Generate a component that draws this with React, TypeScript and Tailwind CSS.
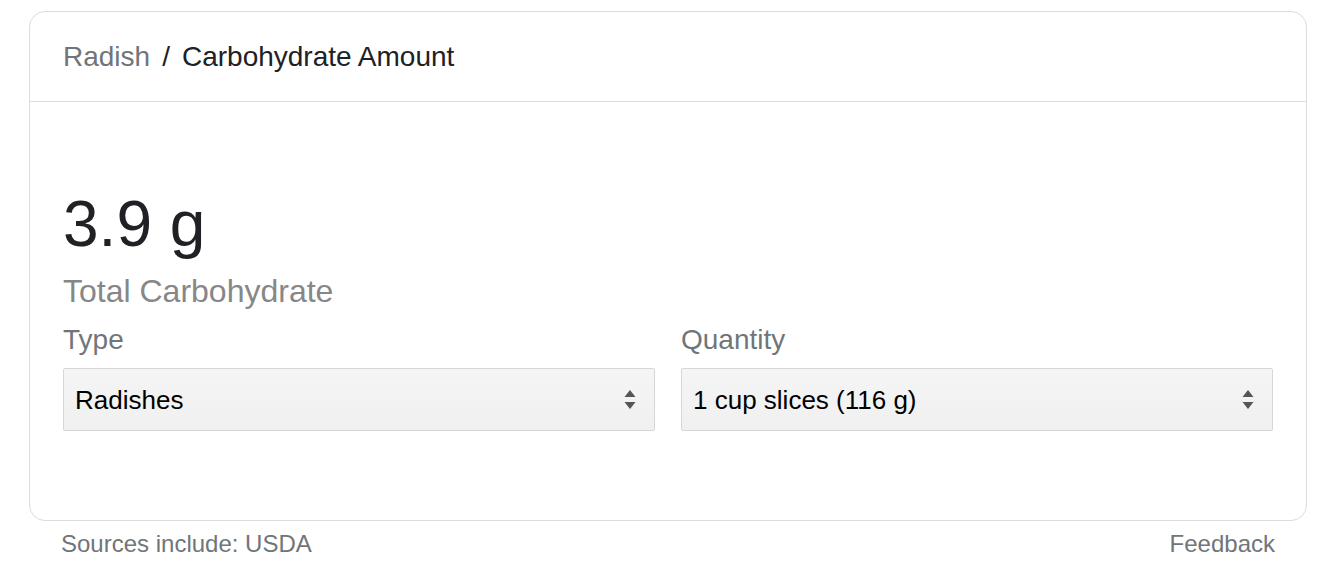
import { useState } from 'react';

const TYPES = ['Radishes', 'Radishes, oriental, raw', 'Radishes, white icicle, raw'];
const QUANTITIES = ['1 cup slices (116 g)', '100 grams', '1 medium (4.5 g)'];

function UpDownArrows() {
  return (
    <svg width="12" height="24" viewBox="0 0 12 24" className="shrink-0">
      <path d="M6 2 L11.5 9 L0.5 9 Z" fill="#555" />
      <path d="M0.5 14 L11.5 14 L6 21 Z" fill="#555" />
    </svg>
  );
}

function SelectBox({ value }: { value: string }) {
  return (
    <div className="flex h-[63px] items-center justify-between rounded-[2px] border border-[#d6d6d6] bg-gradient-to-b from-[#f5f5f5] to-[#f0f0f0] pl-[11px] pr-[18px] text-[26px] leading-[32px] text-black">
      <span>{value}</span>
      <UpDownArrows />
    </div>
  );
}

export default function App() {
  const [type] = useState(TYPES[0]);
  const [qty] = useState(QUANTITIES[0]);

  return (
    <div className="pl-[29px] pr-[15px] pt-[11px] font-['Liberation_Sans',Arial,sans-serif]">
      {/* Card */}
      <div className="rounded-[16px] border border-[#dadce0] bg-white">
        {/* Breadcrumb header */}
        <div className="flex h-[90px] items-center border-b border-[#dadce0] px-[33px] text-[28px] leading-[32px]">
          <span className="text-[#70757a]">Radish</span>
          <span className="px-[12px] text-[#202124]">/</span>
          <span className="text-[#202124]">Carbohydrate Amount</span>
        </div>

        {/* Body */}
        <div className="px-[33px] pt-[90px] pb-[89px]">
          <div className="text-[64px] leading-[64px] text-[#202124]">3.9 g</div>
          <div className="mt-[15px] text-[32px] leading-[40px] text-[#878787]">Total Carbohydrate</div>

          <div className="mt-[13px] grid grid-cols-2 gap-[26px]">
            <div className="flex flex-col">
              <div className="text-[28px] leading-[32px] text-[#70757a]">Type</div>
              <div className="mt-[12px]">
                <SelectBox value={type} />
              </div>
            </div>
            <div className="flex flex-col">
              <div className="text-[28px] leading-[32px] text-[#70757a]">Quantity</div>
              <div className="mt-[12px]">
                <SelectBox value={qty} />
              </div>
            </div>
          </div>
        </div>
      </div>

      {/* Footer */}
      <div className="mt-[9px] flex justify-between px-[32px] text-[24px] leading-[28px] text-[#70757a]">
        <span>Sources include: USDA</span>
        <span>Feedback</span>
      </div>
    </div>
  );
}
